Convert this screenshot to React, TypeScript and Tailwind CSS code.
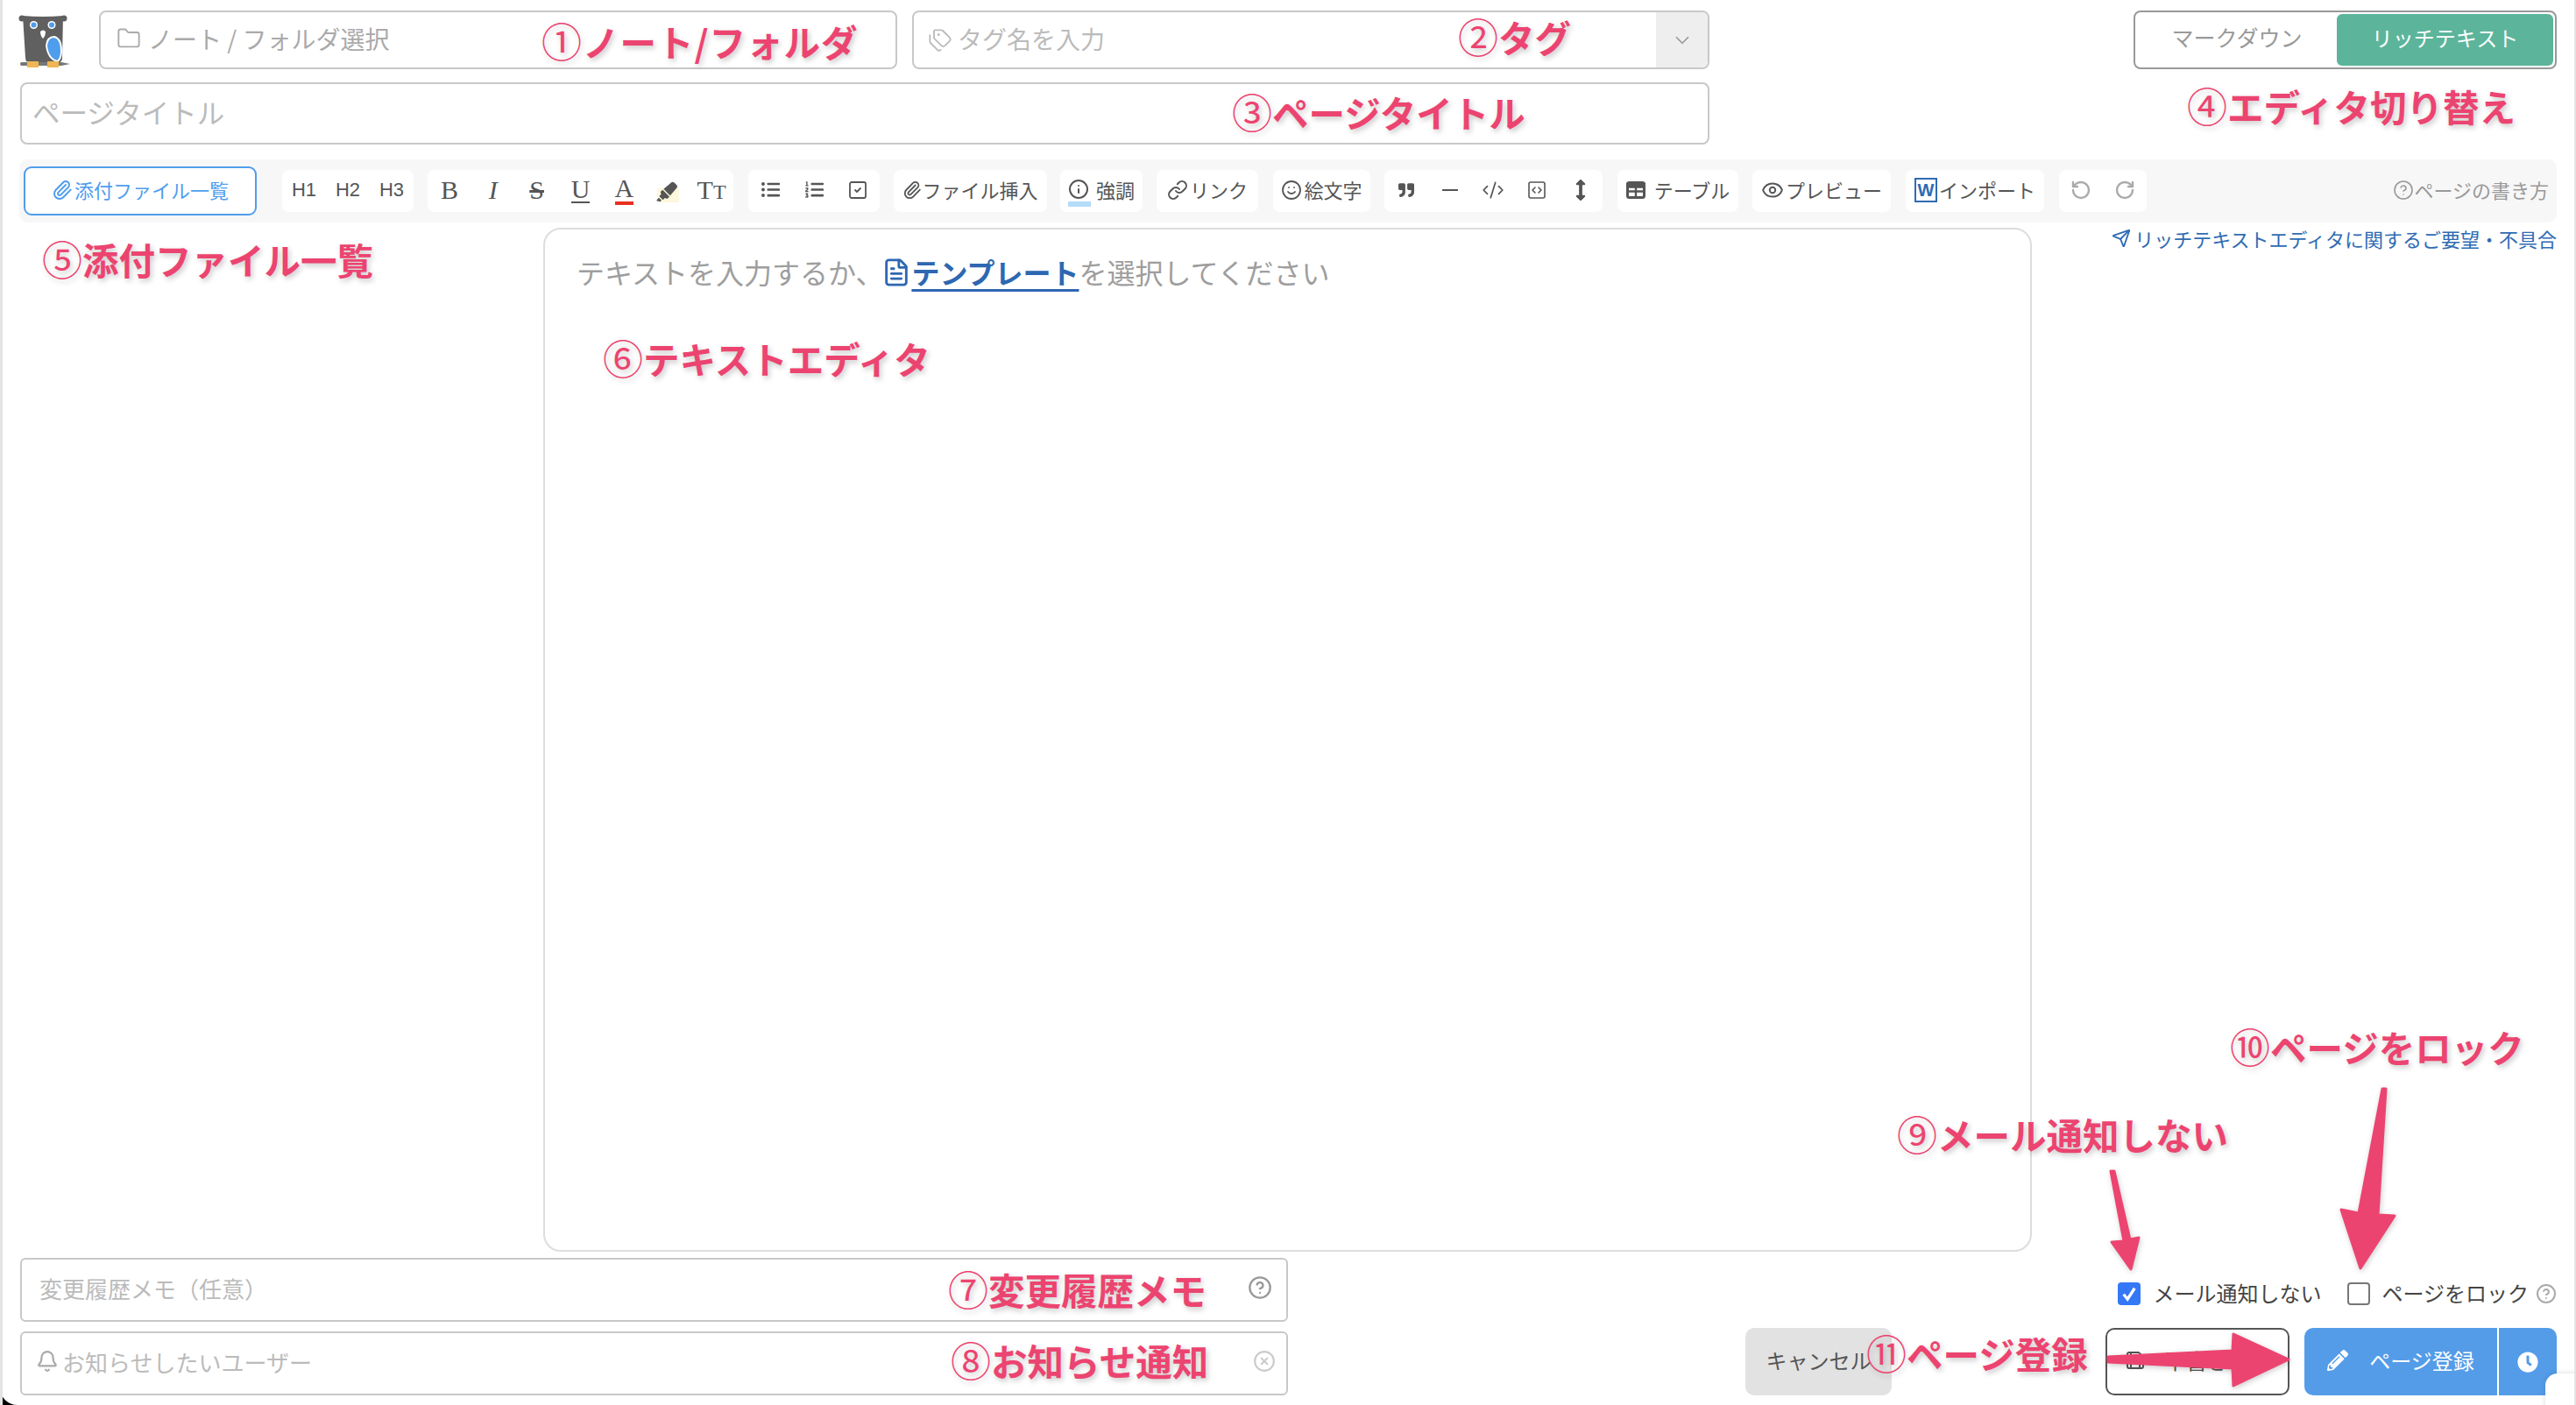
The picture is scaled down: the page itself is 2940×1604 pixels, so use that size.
import type { ReactNode } from "react";
import {
  Bell,
  ChevronDown,
  CircleHelp,
  CircleX,
  CodeXml,
  Eye,
  FileText,
  Folder,
  Info,
  Link,
  Paperclip,
  RotateCcw,
  RotateCw,
  Save,
  Send,
  Smile,
  SquareCheck,
  SquareCode,
  Tags,
} from "lucide-react";
import {
  FaArrowsAltV,
  FaClock,
  FaHighlighter,
  FaListOl,
  FaListUl,
  FaPencilAlt,
  FaQuoteRight,
} from "react-icons/fa";

function Group({ children, className }: { children: ReactNode; className: string }) {
  return (
    <div className={`flex h-[48px] items-center justify-center rounded-[8px] bg-white pb-[3px] text-[22px] text-[#555] ${className}`}>
      {children}
    </div>
  );
}

function Tool({ children }: { children: ReactNode }) {
  return <span className="flex w-[50px] items-center justify-center">{children}</span>;
}

function Note({ num, text, className }: { num: string; text: string; className: string }) {
  return (
    <div
      className={`absolute whitespace-nowrap text-[41.5px] font-bold leading-[48px] text-[#ec4470] [text-shadow:2px_3px_6px_rgba(0,0,0,0.22)] ${className}`}
    >
      <span className="text-[46px] font-normal leading-none">{num}</span>
      {text}
    </div>
  );
}

function Owl() {
  return (
    <svg viewBox="20 15 62 64" className="-ml-[3px] mr-[31px] mt-[3px] h-[64px] w-[62px] shrink-0">
      <circle cx="25" cy="21" r="3.5" fill="#606060" />
      <circle cx="73" cy="21" r="3.5" fill="#606060" />
      <path d="M26 18 Q49 20 72 18 L71 66 Q71 72 64 72 L36 72 Q29 72 29 66 Z" fill="#606060" />
      <circle cx="38.5" cy="28.5" r="4.5" fill="#fff" />
      <circle cx="38.5" cy="28.5" r="3" fill="#4f9ded" />
      <circle cx="59" cy="28.5" r="4.5" fill="#fff" />
      <circle cx="59" cy="28.5" r="3" fill="#4f9ded" />
      <path d="M46 36 Q49 33 52 36 Q52 41 49 44 Q46 41 46 36 Z" fill="#fff" />
      <path d="M53 52 Q54 42 62 42 Q70 44 70 58 Q70 66 66 70 Q55 68 53 52 Z" fill="#4f9ded" stroke="#fff" strokeWidth="2" />
      <path d="M24 71 L70 71 L80 73 L70 75 L24 75 Q22 73 24 71 Z" fill="#777" />
      <rect x="31" y="70" width="13" height="7" fill="#eeb654" />
      <rect x="54" y="70" width="13" height="7" fill="#eeb654" />
    </svg>
  );
}

function Arrows() {
  return (
    <svg
      viewBox="0 0 2940 1604"
      className="pointer-events-none absolute left-0 top-0 h-[1604px] w-[2940px] [filter:drop-shadow(1px_2px_3px_rgba(0,0,0,0.2))]"
    >
      <g fill="#ec4470" stroke="#ec4470" strokeWidth="3" strokeLinejoin="round">
        <path d="M2409 1337 L2413 1337 L2431 1415 L2441 1413 L2432 1449 L2410 1418 L2424 1417 Z" />
        <path d="M2719 1243 L2723 1243 L2714 1387 L2733 1388 L2694 1448 L2672 1381 L2692 1385 Z" />
        <path d="M2406 1549 L2548 1542 L2549 1523 L2612 1552 L2549 1582 L2548 1562 L2406 1555 Z" />
      </g>
    </svg>
  );
}

export default function App() {
  return (
    <div className="relative h-[1604px] w-[2940px] overflow-hidden border-l-[3px] border-r-[2px] border-[#e4e4e4] bg-white font-['Noto_Sans_CJK_JP','Noto_Sans',sans-serif]">
      {/* top row */}
      <div className="flex items-start pl-[20px] pr-[20px] pt-[12px]">
        <Owl />
        <div className="flex h-[67px] w-[911px] items-center rounded-[8px] border-2 border-[#c8c8c8] pb-[3px] pl-[18px] text-[28px] text-[#aaa]">
          <Folder className="mr-[8px] h-[28px] w-[28px]" strokeWidth={1.6} />
          ノート / フォルダ選択
        </div>
        <div className="ml-[17px] flex h-[67px] w-[910px] items-center overflow-hidden rounded-[8px] border-2 border-[#c8c8c8] pl-[16px] text-[28px] text-[#bbb]">
          <Tags className="mr-[6px] h-[28px] w-[28px]" strokeWidth={1.6} />
          <span className="pb-[3px]">タグ名を入力</span>
          <div className="ml-auto flex h-full w-[59px] items-center justify-center bg-[#eee] text-[#999]">
            <ChevronDown className="h-[26px] w-[26px]" strokeWidth={1.6} />
          </div>
        </div>
        <div className="ml-auto flex h-[67px] w-[483px] items-center rounded-[8px] border-2 border-[#999] p-[2px] text-[24px]">
          <span className="flex flex-1 justify-center pb-[5px] text-[25px] text-[#999]">マークダウン</span>
          <span className="flex h-[59px] w-[247px] items-center justify-center rounded-[6px] bg-[#5cb59a] pb-[5px] text-white">リッチテキスト</span>
        </div>
      </div>

      {/* title */}
      <div className="ml-[20px] mt-[15px] flex h-[71px] w-[1928px] items-center rounded-[8px] border-2 border-[#c8c8c8] pb-[3px] pl-[12px] text-[31.5px] text-[#bbb]">
        ページタイトル
      </div>

      {/* toolbar */}
      <div className="ml-[19px] mt-[17px] flex h-[72px] w-[2896px] items-center rounded-[10px] bg-[#f7f7f7] pl-[5px]">
        <div className="flex h-[56px] w-[266px] items-center justify-center rounded-[9px] border-2 border-[#4f9ded] bg-white pb-[3px] text-[22px] text-[#4f9ded]">
          <Paperclip className="mr-[2px] h-[24px] w-[24px]" strokeWidth={2} />
          添付ファイル一覧
        </div>
        <Group className="ml-[29px] w-[150px] font-['Liberation_Sans',sans-serif]">
          <Tool>H1</Tool>
          <Tool>H2</Tool>
          <Tool>H3</Tool>
        </Group>
        <Group className="ml-[16px] w-[349px] font-['Liberation_Serif',serif] text-[30px]">
          <Tool>B</Tool>
          <Tool><i>I</i></Tool>
          <Tool><s>S</s></Tool>
          <Tool><span className="border-b-2 border-[#555] leading-[28px]">U</span></Tool>
          <Tool><span className="border-b-[4px] border-[#e8301f] leading-[30px]">A</span></Tool>
          <Tool>
            <span className="relative flex h-[28px] w-[26px] items-end">
              <span className="absolute bottom-0 right-0 h-[16px] w-[25px] bg-[#fdf7dc]" />
              <FaHighlighter className="relative h-[24px] w-[24px] text-[#555]" />
            </span>
          </Tool>
          <Tool><span className="leading-none">T<span className="text-[24px]">T</span></span></Tool>
        </Group>
        <Group className="ml-[17px] w-[150px]">
          <Tool><FaListUl className="h-[21px] w-[21px]" /></Tool>
          <Tool><FaListOl className="h-[21px] w-[21px]" /></Tool>
          <Tool><SquareCheck className="h-[24px] w-[24px]" strokeWidth={1.8} /></Tool>
        </Group>
        <Group className="ml-[16px] w-[175px]">
          <Paperclip className="h-[22px] w-[22px]" strokeWidth={2} />
          ファイル挿入
        </Group>
        <Group className="ml-[15px] w-[94px]">
          <span className="relative mr-[6px] flex h-[26px] w-[26px]">
            <span className="absolute -bottom-[6px] left-0 h-[6px] w-[26px] bg-[#b5dcf8]" />
            <Info className="relative h-[24px] w-[24px]" strokeWidth={2} />
          </span>
          強調
        </Group>
        <Group className="ml-[16px] w-[116px]">
          <Link className="mr-[2px] h-[24px] w-[24px]" strokeWidth={2} />
          リンク
        </Group>
        <Group className="ml-[17px] w-[111px]">
          <Smile className="mr-[2px] h-[24px] w-[24px]" strokeWidth={1.8} />
          絵文字
        </Group>
        <Group className="ml-[16px] w-[249px]">
          <Tool><FaQuoteRight className="h-[18px] w-[20px]" /></Tool>
          <Tool><span className="h-[2px] w-[18px] bg-[#555]" /></Tool>
          <Tool><CodeXml className="h-[26px] w-[26px]" strokeWidth={1.6} /></Tool>
          <Tool><SquareCode className="h-[24px] w-[24px]" strokeWidth={1.6} /></Tool>
          <Tool><FaArrowsAltV className="h-[24px] w-[24px]" /></Tool>
        </Group>
        <Group className="ml-[17px] w-[138px]">
          <svg viewBox="0 0 22 20" className="mr-[10px] h-[20px] w-[22px]">
            <rect x="1.5" y="1.5" width="19" height="17" rx="2" fill="none" stroke="#555" strokeWidth="3" />
            <path d="M1 6.5H21V3H1ZM1 11.5H21M11 6V18" fill="#555" stroke="#555" strokeWidth="2.4" />
          </svg>
          テーブル
        </Group>
        <Group className="ml-[16px] w-[158px]">
          <Eye className="mr-[2px] h-[26px] w-[26px]" strokeWidth={1.8} />
          プレビュー
        </Group>
        <Group className="ml-[17px] w-[158px]">
          <span className="mr-[2px] flex h-[28px] w-[26px] items-center justify-center border-2 border-[#2f6bb3] font-['Liberation_Sans',sans-serif] text-[20px] font-bold leading-none text-[#2f6bb3]">
            W
          </span>
          インポート
        </Group>
        <Group className="ml-[17px] w-[100px] text-[#aaa]">
          <Tool><RotateCcw className="h-[24px] w-[24px]" strokeWidth={2.4} /></Tool>
          <Tool><RotateCw className="h-[24px] w-[24px]" strokeWidth={2.4} /></Tool>
        </Group>
        <div className="ml-auto flex items-center pb-[3px] pr-[9px] text-[22px] text-[#999]">
          <CircleHelp className="h-[24px] w-[24px]" strokeWidth={1.6} />
          ページの書き方
        </div>
      </div>

      {/* editor area */}
      <div className="mt-[6px] flex h-[1169px]">
        <div className="w-[617px] shrink-0" />
        <div className="flex w-[1699px] shrink-0 items-start rounded-[20px] border-2 border-[#ddd] pl-[36px] pt-[24px] text-[32px] leading-[48px] text-[#9e9e9e]">
          テキストを入力するか、
          <FileText className="-ml-[2px] mt-[7px] h-[36px] w-[34px] text-[#2e67b1]" strokeWidth={2} />
          <span className="font-bold text-[#2e67b1] underline underline-offset-[6px]">テンプレート</span>
          を選択してください
        </div>
        <div className="flex flex-1 items-start justify-end pr-[20px] text-[22px] leading-[24px] text-[#2f6bb3]">
          <span className="flex items-center whitespace-nowrap">
            <Send className="mr-[4px] h-[22px] w-[22px]" strokeWidth={2} />
            リッチテキストエディタに関するご要望・不具合
          </span>
        </div>
      </div>

      {/* bottom */}
      <div className="mt-[7px] flex pl-[20px] pr-[20px]">
        <div className="flex w-[1447px] flex-col gap-[11px]">
          <div className="flex h-[73px] items-center rounded-[6px] border-2 border-[#c8c8c8] pb-[5px] pl-[20px] pr-[16px] text-[26px] text-[#bbb]">
            変更履歴メモ（任意）
            <CircleHelp className="ml-auto h-[28px] w-[28px] text-[#999]" strokeWidth={2} />
          </div>
          <div className="flex h-[73px] items-center rounded-[6px] border-2 border-[#c8c8c8] pb-[5px] pl-[16px] pr-[12px] text-[26px] text-[#bbb]">
            <Bell className="mr-[4px] h-[26px] w-[26px] text-[#aaa]" strokeWidth={2} />
            お知らせしたいユーザー
            <CircleX className="ml-auto h-[26px] w-[26px] text-[#ccc]" strokeWidth={2} />
          </div>
        </div>
        <div className="flex flex-1 flex-col items-end">
          <div className="mt-[28px] flex h-[26px] items-center text-[24px] text-[#444]">
            <span className="flex h-[26px] w-[26px] items-center justify-center rounded-[4px] bg-[#3478f6]">
              <svg viewBox="0 0 16 16" className="h-[20px] w-[20px]">
                <path d="M3 8.5 L6.5 13 L13 3" fill="none" stroke="#fff" strokeWidth="2.6" />
              </svg>
            </span>
            <span className="ml-[14px] pb-[3px]">メール通知しない</span>
            <span className="ml-[30px] h-[26px] w-[26px] rounded-[4px] border-2 border-[#777]" />
            <span className="ml-[13px] pb-[3px]">ページをロック</span>
            <CircleHelp className="ml-[8px] h-[24px] w-[24px] text-[#aaa]" strokeWidth={2} />
          </div>
          <div className="mt-[26px] flex h-[77px] items-stretch text-[24px]">
            <div className="flex w-[167px] items-center justify-center rounded-[10px] bg-[#e2e2e2] pb-[3px] text-[#555]">キャンセル</div>
            <div className="ml-[244px] flex w-[210px] items-center justify-center rounded-[10px] border-2 border-[#555] bg-white pb-[3px] text-[#555]">
              <Save className="mr-[22px] h-[24px] w-[24px]" strokeWidth={2} />
              下書き保存
            </div>
            <div className="ml-[17px] flex w-[288px] overflow-hidden rounded-[10px] bg-[#549ce8] text-white">
              <div className="flex w-[222px] items-center justify-center border-r-2 border-white pb-[3px]">
                <FaPencilAlt className="mr-[24px] h-[24px] w-[24px]" />
                ページ登録
              </div>
              <div className="flex flex-1 items-center justify-center">
                <FaClock className="h-[24px] w-[24px]" />
              </div>
            </div>
          </div>
        </div>
      </div>

      {/* window corners */}
      <div className="absolute -left-[3px] bottom-0 h-[20px] w-[20px] bg-black">
        <div className="h-full w-full rounded-bl-[20px] bg-white" />
      </div>
      <div className="absolute left-[2902px] top-[1568px] h-[40px] w-[40px] rounded-tl-[14px] bg-white shadow-[0_0_6px_rgba(0,0,0,0.15)]" />

      {/* annotations */}
      <div className="absolute -left-[3px] top-0">
        <Arrows />
        <Note num="①" text="ノート/フォルダ" className="left-[618px] top-[22px] tracking-[1px]" />
        <Note num="②" text="タグ" className="left-[1664px] top-[17px]" />
        <Note num="③" text="ページタイトル" className="left-[1406px] top-[103px]" />
        <Note num="④" text="エディタ切り替え" className="left-[2496px] top-[96px]" />
        <Note num="⑤" text="添付ファイル一覧" className="left-[48px] top-[271px]" />
        <Note num="⑥" text="テキストエディタ" className="left-[688px] top-[384px]" />
        <Note num="⑦" text="変更履歴メモ" className="left-[1082px] top-[1447px]" />
        <Note num="⑧" text="お知らせ通知" className="left-[1085px] top-[1528px]" />
        <Note num="⑨" text="メール通知しない" className="left-[2165px] top-[1270px]" />
        <Note num="⑩" text="ページをロック" className="left-[2545px] top-[1170px]" />
        <Note num="⑪" text="ページ登録" className="left-[2130px] top-[1520px]" />
      </div>
    </div>
  );
}
